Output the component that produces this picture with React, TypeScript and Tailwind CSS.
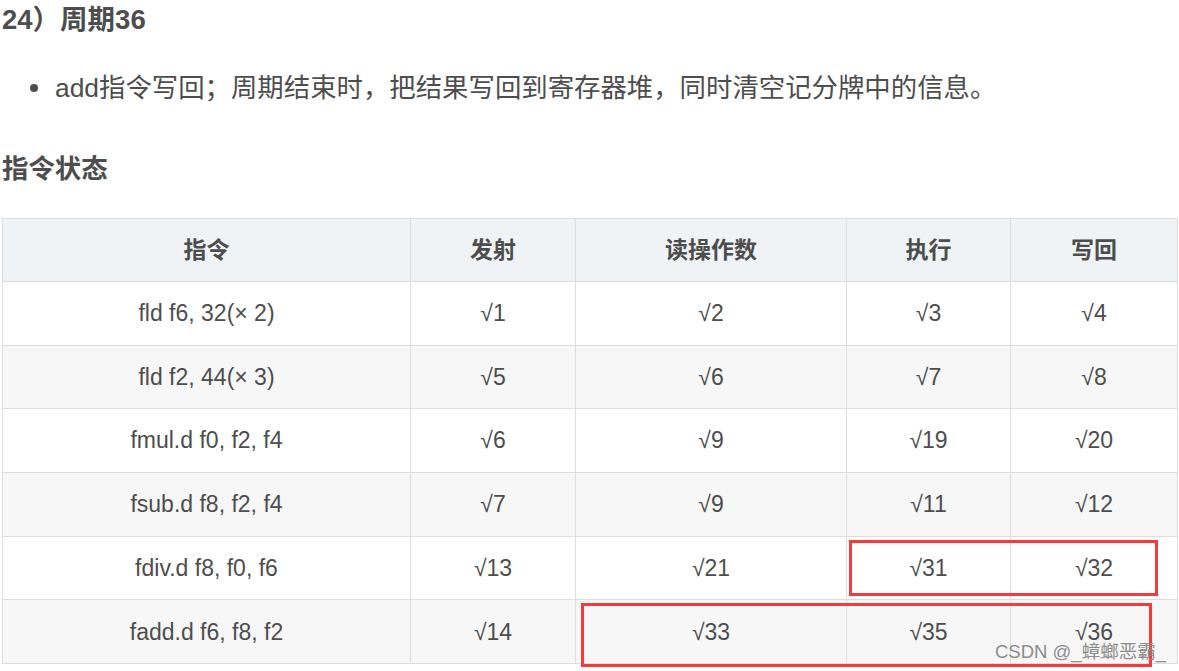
import React from "react";

const rows: string[][] = [
  ["fld f6, 32(× 2)", "√1", "√2", "√3", "√4"],
  ["fld f2, 44(× 3)", "√5", "√6", "√7", "√8"],
  ["fmul.d f0, f2, f4", "√6", "√9", "√19", "√20"],
  ["fsub.d f8, f2, f4", "√7", "√9", "√11", "√12"],
  ["fdiv.d f8, f0, f6", "√13", "√21", "√31", "√32"],
  ["fadd.d f6, f8, f2", "√14", "√33", "√35", "√36"],
];

const headers = ["指令", "发射", "读操作数", "执行", "写回"];

export default function App() {
  return (
    <div
      className="w-[1179px] h-[671px] bg-white overflow-hidden text-[#4d4d4d]"
      style={{ fontFamily: '"Liberation Sans", Arial, "Noto Sans CJK SC", sans-serif' }}
    >
      <div className="pl-[2px]">
        <h4 className="text-[27.5px] font-bold leading-[40px] h-[40px]">24）周期36</h4>
        <div className="mt-[28px] flex items-center h-[40px] text-[26.4px] leading-[40px]">
          <span className="ml-[28px] w-[8px] h-[8px] rounded-full bg-[#4d4d4d] shrink-0" />
          <span className="ml-[17px]">add指令写回；周期结束时，把结果写回到寄存器堆，同时清空记分牌中的信息。</span>
        </div>
        <div className="mt-[41px] text-[26.4px] font-bold leading-[40px] h-[40px]">指令状态</div>
      </div>
      <div className="relative mt-[29px] ml-[2px] w-[1175px]">
        <table className="w-[1175px] table-fixed border-collapse text-[23px] text-[#4d4d4d]">
          <colgroup>
            <col className="w-[408px]" />
            <col className="w-[165px]" />
            <col className="w-[271px]" />
            <col className="w-[164px]" />
            <col className="w-[167px]" />
          </colgroup>
          <thead>
            <tr className="h-[63px] bg-[#eff3f5]">
              {headers.map((h) => (
                <th key={h} className="border border-[#dddddd] font-bold text-center align-middle p-0">
                  {h}
                </th>
              ))}
            </tr>
          </thead>
          <tbody>
            {rows.map((r, i) => (
              <tr key={i} className={i % 2 === 1 ? "h-[63.7px] bg-[#f7f7f7]" : "h-[63.7px] bg-white"}>
                {r.map((c, j) => (
                  <td key={j} className="border border-[#dddddd] text-center align-middle p-0">
                    {c}
                  </td>
                ))}
              </tr>
            ))}
          </tbody>
        </table>
        <div className="absolute left-[847px] top-[322px] w-[309px] h-[56px] border-[3px] border-[#f73939]" />
        <div className="absolute left-[579px] top-[385px] w-[571px] h-[64px] border-[3px] border-[#f73939]" />
        <div className="absolute left-[993px] top-[422px] text-[18.5px] leading-[24px] text-[#8c8c8c] whitespace-nowrap">
          CSDN @_蟑螂恶霸_
        </div>
      </div>
    </div>
  );
}
